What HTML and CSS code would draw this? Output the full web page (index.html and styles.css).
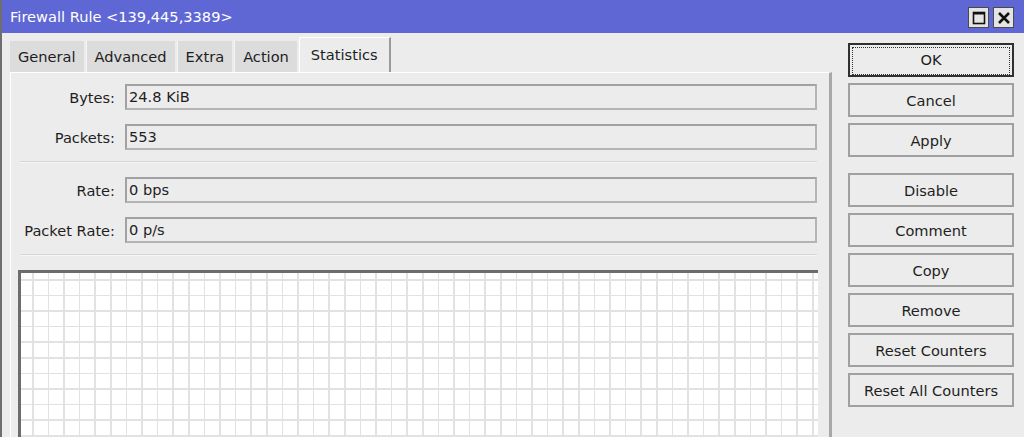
FILE: index.html
```html
<!DOCTYPE html>
<html>
<head>
    <title>Firewall Rule</title>
    <link rel="stylesheet" href="styles.css">
</head>
<body>
    <div class="window">
        <div class="title-bar">
            <span class="title">Firewall Rule &lt;139,445,3389&gt;</span>
            <div class="title-buttons">
                <span class="title-btn">
                    <svg width="14" height="14" viewBox="0 0 14 14"><rect x="1.5" y="1.5" width="11" height="11" fill="none" stroke="#111" stroke-width="1.6"/><line x1="1" y1="2.5" x2="13" y2="2.5" stroke="#111" stroke-width="2"/></svg>
                </span>
                <span class="title-btn">
                    <svg width="14" height="14" viewBox="0 0 14 14"><path d="M2 2 L12 12 M12 2 L2 12" stroke="#111" stroke-width="2.6"/></svg>
                </span>
            </div>
        </div>
        <div class="content">
            <div class="main">
                <div class="tabs">
                    <div class="tab">General</div>
                    <div class="tab">Advanced</div>
                    <div class="tab">Extra</div>
                    <div class="tab">Action</div>
                    <div class="tab active">Statistics</div>
                </div>
                <div class="panel">
                    <div class="row">
                        <label>Bytes:</label>
                        <div class="field">24.8 KiB</div>
                    </div>
                    <div class="row">
                        <label>Packets:</label>
                        <div class="field">553</div>
                    </div>
                    <div class="separator"></div>
                    <div class="row">
                        <label>Rate:</label>
                        <div class="field">0 bps</div>
                    </div>
                    <div class="row">
                        <label>Packet Rate:</label>
                        <div class="field">0 p/s</div>
                    </div>
                    <div class="separator"></div>
                    <div class="graph"></div>
                </div>
            </div>
            <div class="side">
                <button class="default"><span class="focus">OK</span></button>
                <button>Cancel</button>
                <button>Apply</button>
                <button class="spaced">Disable</button>
                <button>Comment</button>
                <button>Copy</button>
                <button>Remove</button>
                <button>Reset Counters</button>
                <button>Reset All Counters</button>
            </div>
        </div>
    </div>
</body>
</html>
```

FILE: styles.css
```css
body {
    margin: 0;
    background: #ececec;
    font-family: "DejaVu Sans", Verdana, sans-serif;
    font-size: 14.6px;
    color: #1e1e1e;
}
.window {
    height: 437px;
    border-left: 2px solid #6e6e6e;
    overflow: hidden;
}
.title-bar {
    height: 33px;
    background: #5f67d5;
    display: flex;
    align-items: center;
    justify-content: space-between;
    padding: 0 10px 0 8px;
}
.title {
    color: #fff;
}
.title-buttons {
    display: flex;
    gap: 4px;
    margin-top: 2px;
}
.title-btn {
    width: 19px;
    height: 19px;
    background: #e4e4e4;
    border: 1px solid #4a4a4a;
    display: flex;
    align-items: center;
    justify-content: center;
}
.content {
    display: flex;
    padding-top: 4px;
}
.main {
    margin-left: 8px;
    width: 822px;
}
.tabs {
    display: flex;
    align-items: flex-end;
    height: 35px;
}
.tab {
    height: 31px;
    line-height: 31px;
    padding: 0 8px;
    margin-right: 2px;
    background: #dcdcdc;
    border-left: 1px solid #f4f4f4;
    box-sizing: border-box;
}
.tab:first-child {
    border-left: none;
}
.tab.active {
    height: 35px;
    line-height: 33px;
    background: #ececec;
    border-left: 1px solid #fff;
    border-top: 1px solid #fff;
    border-right: 2px solid #9a9a9a;
    padding: 0 11px;
}
.panel {
    height: 400px;
    border-top: 1px solid #fff;
    border-left: 1px solid #fff;
    border-right: 3px solid #a8a8a8;
    padding: 11px 12px 0 8px;
}
.row {
    display: flex;
    align-items: center;
    margin-bottom: 14px;
}
.row label {
    width: 96px;
    text-align: right;
    margin-right: 10px;
    white-space: nowrap;
}
.field {
    flex: 1;
    height: 22px;
    line-height: 22px;
    border: 2px solid #a2a2a2;
    border-right-color: #b4b4b4;
    border-bottom-color: #b4b4b4;
    padding-left: 2px;
}
.separator {
    height: 1px;
    background: #d6d6d6;
    border-bottom: 1px solid #f6f6f6;
    margin: -3px 0 14px 1px;
}
.graph {
    margin-left: -1px;
    margin-right: -1px;
    height: 200px;
    border-top: 3px solid #6c6c6c;
    border-left: 3px solid #6c6c6c;
    background-color: #fff;
    background-image:
        repeating-linear-gradient(to right, transparent 0 11px, #e2e2e2 11px 12.6px, transparent 12.6px 15.6px),
        repeating-linear-gradient(to bottom, transparent 0 6px, #e2e2e2 6px 7.6px, transparent 7.6px 15.6px);
}
.side {
    margin-left: 16px;
    width: 166px;
    display: flex;
    flex-direction: column;
    padding-top: 6px;
}
button {
    height: 34px;
    margin-bottom: 6px;
    background: #ececec;
    border: 2px solid #a0a0a0;
    font-family: "DejaVu Sans", Verdana, sans-serif;
    font-size: 14.6px;
    color: #1e1e1e;
    padding: 0;
}
button.spaced {
    margin-top: 10px;
}
button.default {
    border: 2px solid #303030;
    padding: 2px;
}
button.default .focus {
    display: block;
    height: 100%;
    line-height: 24px;
    border: 1px dotted #333;
}
```
